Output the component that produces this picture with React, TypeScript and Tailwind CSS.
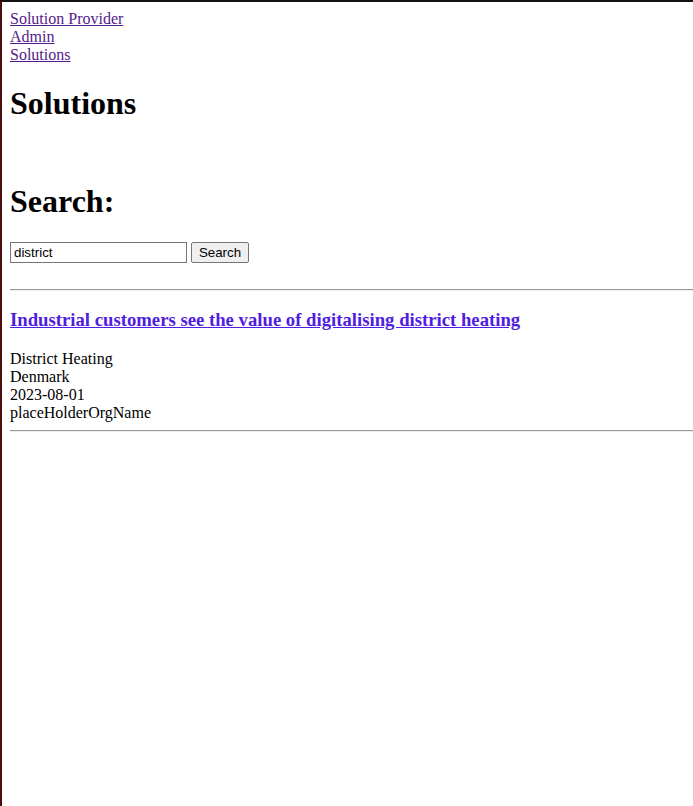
const navLinks = ['Solution Provider', 'Admin', 'Solutions'];

const result = {
  title: 'Industrial customers see the value of digitalising district heating',
  lines: ['District Heating', 'Denmark', '2023-08-01', 'placeHolderOrgName'],
};

function Rule() {
  return <div className="h-[2px] w-full border-t border-b border-t-[#9a9a9a] border-b-[#eeeeee]" />;
}

export default function App() {
  return (
    <div className="min-h-[806px] border-t-2 border-l-2 border-t-[#111111] border-l-[#4a0d0d] bg-white pt-2 pl-2 font-['Liberation_Serif',serif] text-[16px] leading-[18px] text-black">
      <nav className="flex flex-col items-start">
        {navLinks.map((l) => (
          <a key={l} href="#" className="text-[#551a8b] underline">
            {l}
          </a>
        ))}
      </nav>

      <h1 className="mt-[21px] text-[32px] leading-[37px] font-bold">Solutions</h1>

      <h1 className="mt-[61px] text-[32px] leading-[37px] font-bold">Search:</h1>

      <form className="mt-[22px] flex items-center gap-[4px]" onSubmit={(e) => e.preventDefault()}>
        <input
          defaultValue="district"
          className="h-[21px] w-[177px] border border-[#767676] bg-white px-[3px] font-['Liberation_Sans',sans-serif] text-[13.33px] text-black outline-none"
        />
        <button
          type="submit"
          className="h-[21px] w-[58px] rounded-[2px] border border-[#767676] bg-[#efefef] font-['Liberation_Sans',sans-serif] text-[13.33px] leading-none text-black"
        >
          Search
        </button>
      </form>

      <div className="mt-[26px]">
        <Rule />
      </div>

      <div className="mt-[18px]">
        <h3 className="text-[18.72px] leading-[22px] font-bold">
          <a href="#" className="text-[#4f1ee0] underline">
            {result.title}
          </a>
        </h3>
        <div className="mt-[19px] flex flex-col">
          {result.lines.map((t) => (
            <span key={t}>{t}</span>
          ))}
        </div>
      </div>

      <div className="mt-[8px]">
        <Rule />
      </div>
    </div>
  );
}
